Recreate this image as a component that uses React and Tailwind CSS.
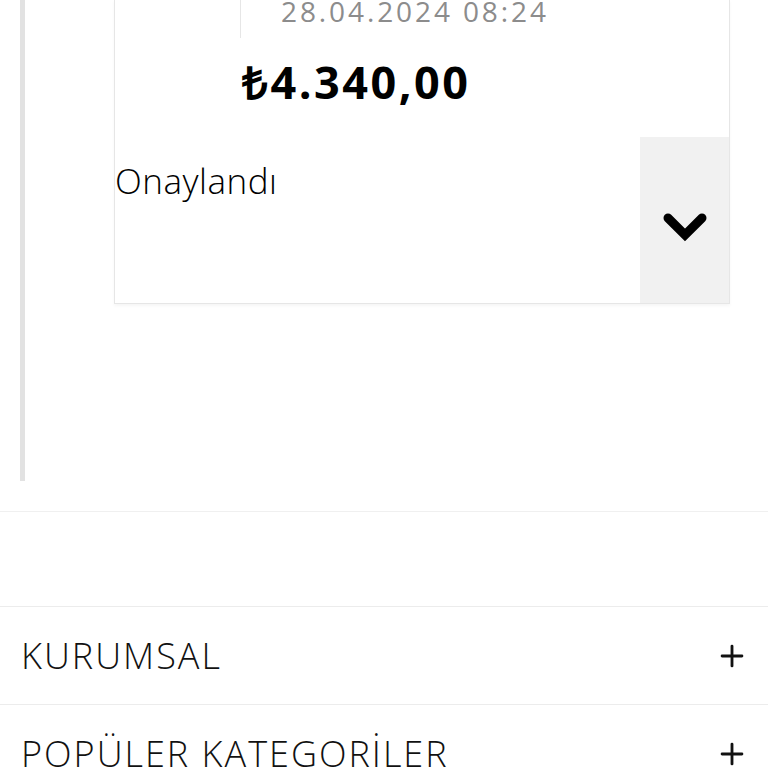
import { Plus } from "lucide-react";

const FooterRow = ({ title }) => (
  <div className="flex h-[98px] items-center justify-between border-t border-[#ececec] pl-[21px] pr-[19px]">
    <span className="text-[36px] font-light leading-[40px] tracking-[2px] text-[#111]">{title}</span>
    <Plus size={34} strokeWidth={2} className="text-[#111]" />
  </div>
);

export default function App() {
  return (
    <div className="h-[768px] w-[768px] overflow-hidden bg-white font-['Open_Sans',sans-serif]">
      {/* order card */}
      <div className="ml-[20px] h-[481px] border-l-[5px] border-[#e2e2e2]">
        <div className="ml-[89px] w-[616px] border-x border-b border-[#e6e6e6] shadow-[0_2px_3px_rgba(0,0,0,0.04)]">
          <div className="ml-[125px] h-[38px] border-l border-[#e6e6e6] pl-[40px]">
            <div className="text-[28px] leading-[22px] tracking-[2.9px] text-[#8c8c8c]">28.04.2024 08:24</div>
          </div>
          <div className="mt-[21px] pl-[127px] text-[45px] font-bold leading-[45px] tracking-[2.5px] text-black">₺4.340,00</div>
          <div className="mt-[33px] flex h-[166px]">
            <div className="flex-1 pt-[24px] text-[35px] font-light leading-[40px] tracking-[0.5px] text-black">Onaylandı</div>
            <div className="flex w-[89px] items-center justify-center bg-[#f1f1f1] pt-[16px]">
              <svg width="44" height="30" viewBox="0 0 44 30">
                <path d="M5 5 L22 22 L39 5" fill="none" stroke="black" strokeWidth="9" strokeLinecap="round" strokeLinejoin="miter" />
              </svg>
            </div>
          </div>
        </div>
      </div>

      <div className="mt-[30px] h-[95px] border-t border-[#f0f0f0]" />

      <FooterRow title="KURUMSAL" />
      <FooterRow title="POPÜLER KATEGORİLER" />
    </div>
  );
}
